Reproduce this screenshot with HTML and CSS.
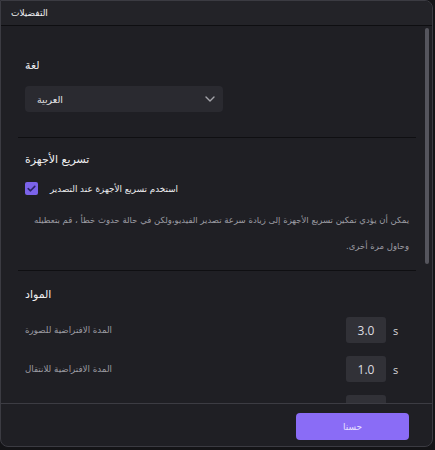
FILE: index.html
```
<!DOCTYPE html>
<html lang="ar">
<head>
<meta charset="utf-8">
<link rel="stylesheet" href="styles.css">
</head>
<body>
<div class="window">
  <div class="titlebar"><span class="title">التفضيلات</span></div>
  <div class="content">
    <div class="scroll">
      <section class="section s1">
        <div class="heading">لغة</div>
        <div class="select">
          <span class="select-text">العربية</span>
          <svg class="chev" width="10" height="6" viewBox="0 0 10 6"><path d="M1 1 L5 5 L9 1" fill="none" stroke="#a4a4aa" stroke-width="1.4" stroke-linecap="round" stroke-linejoin="round"/></svg>
        </div>
      </section>
      <section class="section s2">
        <div class="heading">تسريع الأجهزة</div>
        <label class="check-row">
          <span class="checkbox"><svg width="13" height="13" viewBox="0 0 13 13"><path d="M3.2 6.6 L5.5 8.8 L9.8 4.4" fill="none" stroke="#2a2466" stroke-width="1.6" stroke-linecap="round" stroke-linejoin="round"/></svg></span>
          <span class="check-label">استخدم تسريع الأجهزة عند التصدير</span>
        </label>
        <p class="desc" dir="rtl">يمكن أن يؤدي تمكين تسريع الأجهزة إلى زيادة سرعة تصدير الفيديو،ولكن في حالة حدوث خطأ ، قم بتعطيله وحاول مرة أخرى.</p>
      </section>
      <section class="section s3">
        <div class="heading">المواد</div>
        <div class="row">
          <span class="row-label">المدة الافتراضية للصورة</span>
          <span class="ctrl"><span class="num">3.0</span><span class="unit">s</span></span>
        </div>
        <div class="row">
          <span class="row-label">المدة الافتراضية للانتقال</span>
          <span class="ctrl"><span class="num">1.0</span><span class="unit">s</span></span>
        </div>
        <div class="row">
          <span class="row-label">المدة الافتراضية للنص</span>
          <span class="ctrl"><span class="num">5.0</span><span class="unit">s</span></span>
        </div>
      </section>
    </div>
    <div class="track"><div class="thumb"></div></div>
  </div>
  <div class="footer"><button class="ok">حسنا</button></div>
</div>
</body>
</html>
```
FILE: styles.css
```
* { box-sizing: border-box; }
html, body { margin: 0; padding: 0; }
body {
  background: #141417;
  width: 435px;
  height: 450px;
  overflow: hidden;
  font-family: "DejaVu Sans", "Noto Sans", sans-serif;
  color: #e6e6ea;
}
.window {
  width: 433px;
  height: 447px;
  border: 1px solid #3b3b42;
  border-radius: 0 8px 8px 8px;
  background: #1f1f24;
  display: flex;
  flex-direction: column;
  overflow: hidden;
}
.titlebar {
  height: 25px;
  flex: none;
  background: #232328;
  border-bottom: 1px solid #0e0e11;
  display: flex;
  align-items: center;
  padding-left: 10px;
}
.title { font-size: 9px; color: #f0f0f2; }
.content {
  flex: 1;
  min-height: 0;
  display: flex;
}
.scroll {
  width: 424px;
  flex: none;
  overflow: hidden;
  padding: 0 9px 0 17px;
}
.track {
  width: 4px;
  flex: none;
  padding-top: 2px;
}
.thumb {
  width: 4px;
  height: 236px;
  border-radius: 2px;
  background: #55555d;
}
.section {
  padding: 0 7px;
  border-bottom: 1px solid #0f0f12;
}
.heading {
  font-size: 11px;
  line-height: 14px;
  color: #eeeef0;
}
.s1 { padding-top: 33px; padding-bottom: 25px; }
.select {
  margin-top: 13px;
  width: 198px;
  height: 26px;
  border-radius: 4px;
  background: #2a2a30;
  display: flex;
  align-items: center;
  justify-content: space-between;
  padding: 0 8px 0 12px;
}
.select-text { font-size: 9.5px; color: #e2e2e6; }
.chev { display: block; }
.s2 { padding-top: 15px; padding-bottom: 11px; }
.check-row {
  margin-top: 15px;
  display: flex;
  align-items: center;
  height: 13px;
  gap: 12px;
}
.checkbox {
  width: 13px;
  height: 13px;
  border-radius: 2px;
  background: #7b63ea;
  display: block;
}
.checkbox svg { display: block; }
.check-label { font-size: 8.8px; color: #ececef; }
.desc {
  margin: 12px 0 0;
  font-size: 8.5px;
  line-height: 26px;
  color: #9c9ca3;
}
.s3 { padding-top: 17px; border-bottom: none; }
.row {
  display: flex;
  align-items: center;
  justify-content: space-between;
  height: 26px;
  margin-top: 13px;
  padding-right: 11px;
}
.heading + .row { margin-top: 15px; }
.row-label { font-size: 8.7px; color: #9c9ca3; }
.ctrl { display: flex; align-items: center; gap: 7px; }
.num {
  width: 40px;
  height: 26px;
  border-radius: 3px;
  background: #313137;
  display: flex;
  align-items: center;
  justify-content: center;
  font-family: "Open Sans", sans-serif;
  font-size: 12px;
  color: #dcdce0;
}
.unit {
  font-family: "Open Sans", sans-serif;
  font-size: 11px;
  color: #d6d6da;
  width: 5px;
}
.footer {
  height: 43px;
  flex: none;
  border-top: 1px solid #3c3c43;
  display: flex;
  justify-content: flex-end;
  align-items: flex-start;
  padding: 9px 23px 0 0;
}
.ok {
  width: 113px;
  height: 27px;
  border: none;
  border-radius: 4px;
  background: #8a6cf6;
  color: #e6e0ff;
  font-family: "DejaVu Sans", sans-serif;
  font-size: 9px;
  padding: 0;
}
```
